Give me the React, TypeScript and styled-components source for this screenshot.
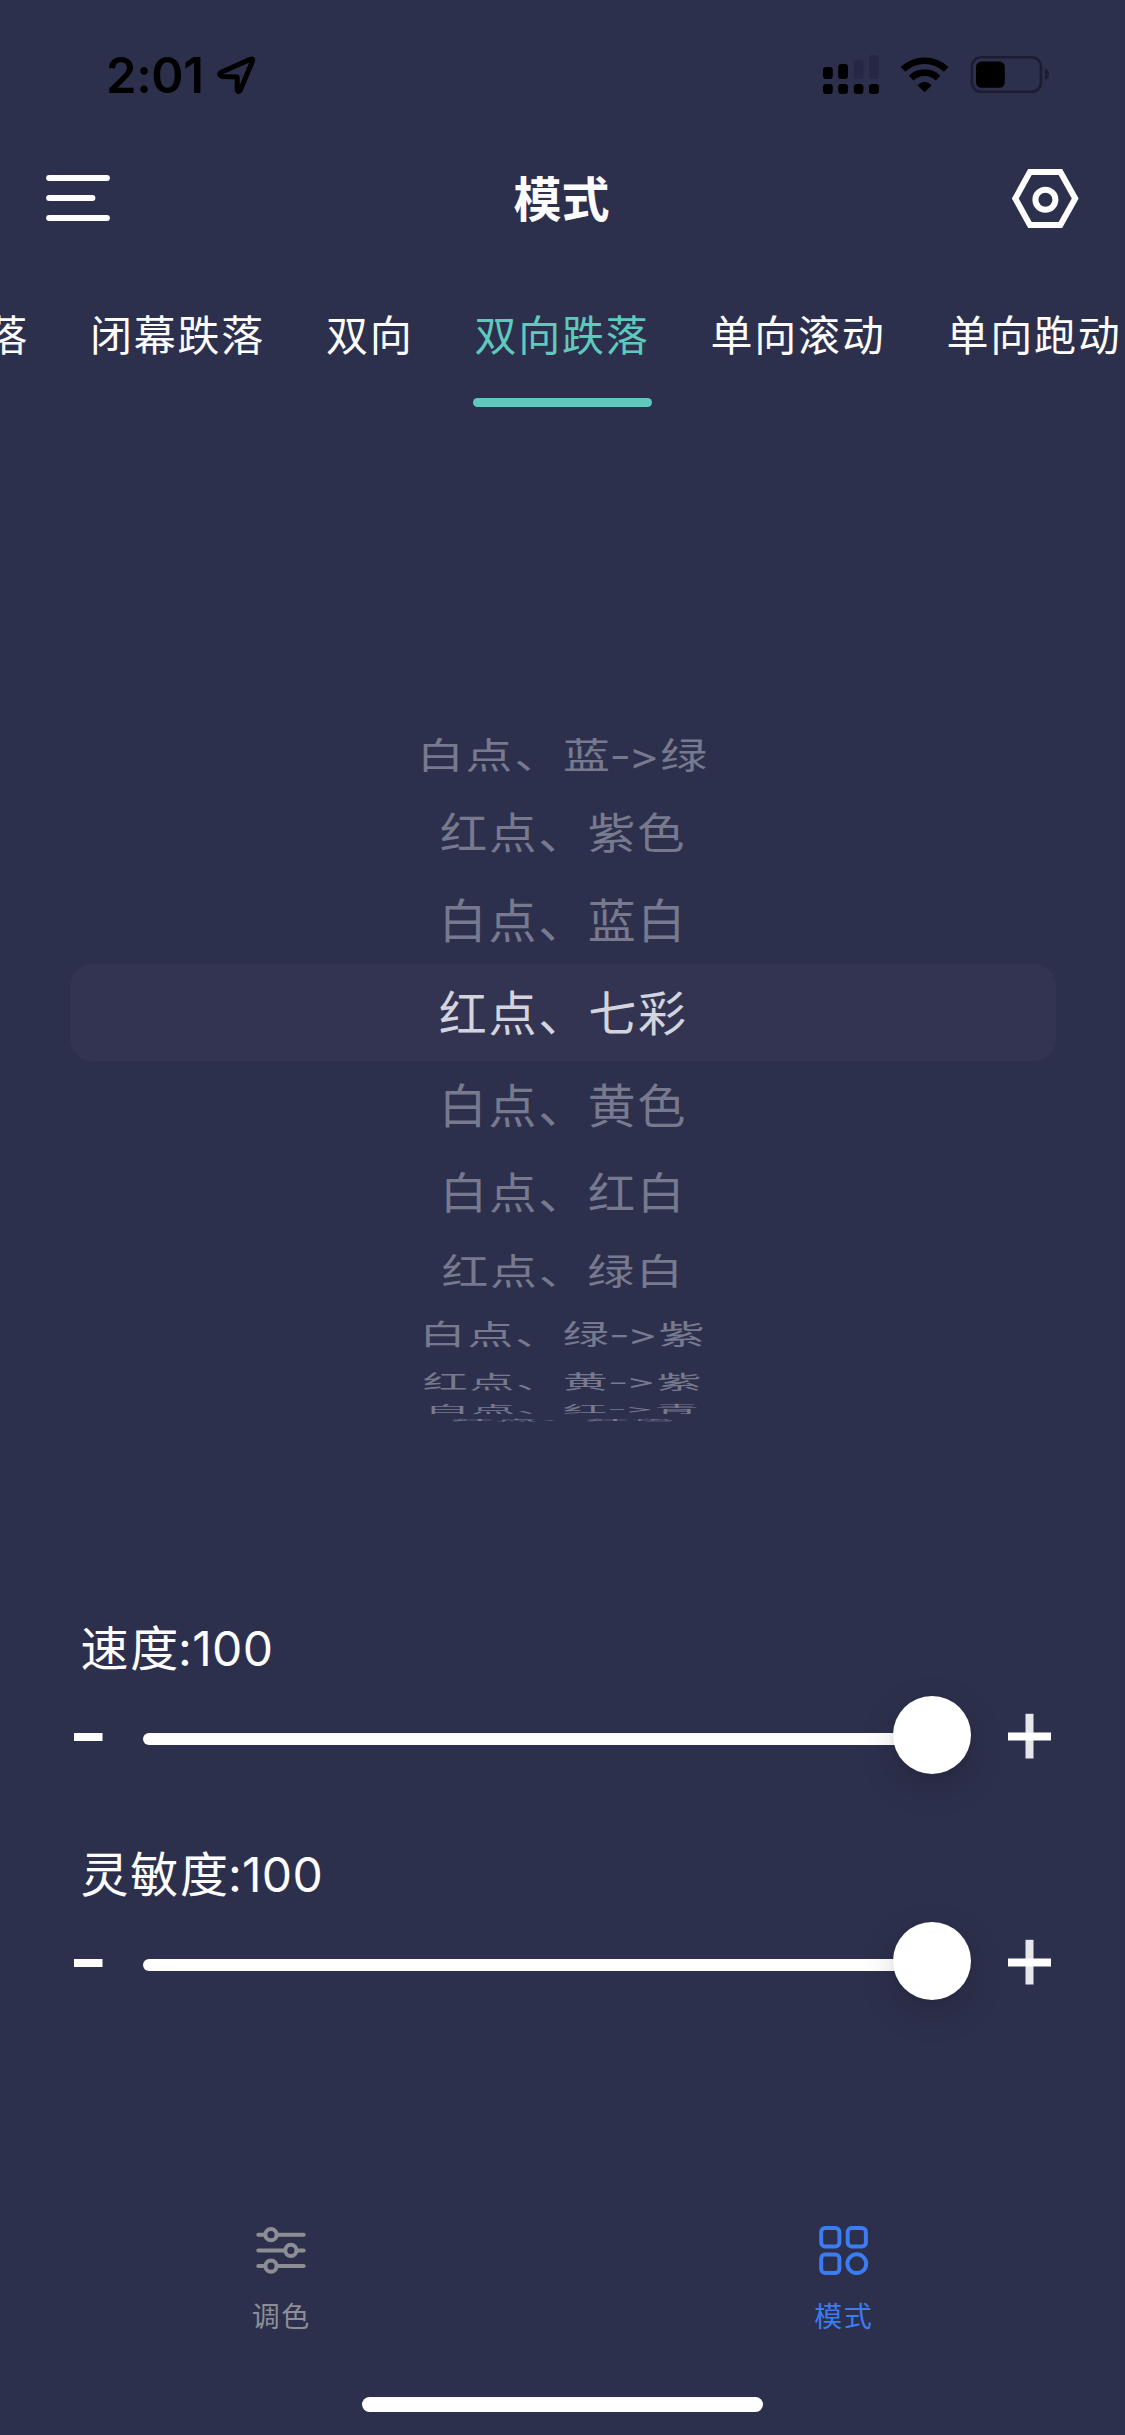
import React from "react";
import styled, { createGlobalStyle } from "styled-components";

const GlobalStyle = createGlobalStyle`
  * { box-sizing: border-box; }
  html, body { margin: 0; padding: 0; background: #2d304c; }
  body { overflow: hidden; }
`;

const Screen = styled.div`
  width: 1125px;
  height: 2435px;
  display: flex;
  flex-direction: column;
  background: #2d304c;
  color: #fdfdff;
  overflow: hidden;
  font-family: Inter, "Noto Sans CJK SC", sans-serif;
`;

const StatusBar = styled.div`
  height: 118px;
  flex: none;
  display: flex;
  align-items: flex-start;
  justify-content: space-between;
  padding: 47px 75px 0 106px;
  color: #000;
`;

const StatusLeft = styled.div`
  display: flex;
  gap: 14px;
`;

const Clock = styled.span`
  width: 96px;
  font-size: 49px;
  line-height: 57px;
  font-weight: 600;
  letter-spacing: -0.4px;
  white-space: nowrap;
`;

const StatusIcons = styled.svg`
  display: block;
  margin-top: 7px;
`;

const NavBar = styled.header`
  height: 162px;
  flex: none;
  display: grid;
  grid-template-columns: 90px 1fr 90px;
  align-items: center;
  padding: 0 44px;
`;

const NavIcon = styled.svg<{ $end?: boolean }>`
  display: block;
  justify-self: ${(p) => (p.$end ? "end" : "start")};
`;

const Title = styled.h1`
  margin: 0 2px 0 0;
  padding-top: 1px;
  text-align: center;
  font-size: 48px;
  line-height: 60px;
  font-weight: 600;
`;

const Tabs = styled.nav`
  height: 140px;
  flex: none;
  display: flex;
  justify-content: center;
  gap: 57px;
  white-space: nowrap;
`;

const Tab = styled.div<{ $active?: boolean }>`
  flex: none;
  height: 127px;
  display: flex;
  flex-direction: column;
  justify-content: space-between;
  padding-top: 25px;
  font-size: 42px;
  line-height: 62px;
  letter-spacing: 1.75px;
  color: ${(p) => (p.$active ? "#5fc9be" : "#fdfdff")};
`;

const TabLabel = styled.span`
  padding: 0 2.5px 0 1.5px;
`;

const Underline = styled.span`
  height: 9px;
  border-radius: 4.5px;
  background: #5fc9be;
`;

const Picker = styled.section`
  height: 1180px;
  flex: none;
  display: grid;
  grid-template-rows: 1fr;
  grid-template-columns: 1fr;
  justify-items: center;
  align-items: start;
  padding-top: 544px;
`;

const PickerBand = styled.div`
  grid-area: 1 / 1;
  width: 986px;
  height: 97px;
  border-radius: 22px;
  background: #333451;
`;

const PickerRow = styled.div<{ $selected: boolean }>`
  grid-area: 1 / 1;
  height: 97px;
  line-height: 99px;
  padding-left: 1.5px;
  font-size: 48px;
  letter-spacing: 1.8px;
  white-space: nowrap;
  color: ${(p) => (p.$selected ? "#d3d4de" : "#77798f")};
`;

const Arrow = styled.span`
  letter-spacing: -3px;
  margin: 0 4px 0 -2px;
`;

const Control = styled.section`
  height: 226px;
  flex: none;
  display: flex;
  flex-direction: column;
  padding: 12px 72px 0 73px;
`;

const ControlLabel = styled.div`
  height: 72px;
  padding-left: 7.5px;
  font-size: 48px;
  line-height: 73px;
  letter-spacing: 1.8px;
`;

const Latin = styled.span`
  letter-spacing: 0.3px;
  margin-left: -2px;
`;

const SliderRow = styled.div`
  display: flex;
  align-items: center;
  height: 78px;
  margin-top: 12px;
`;

const StepIcon = styled.svg`
  display: block;
  flex: none;
  margin-top: 2px;
`;

const Slider = styled.div`
  flex: 1;
  display: flex;
  align-items: center;
  margin: 0 35px 0 39px;
`;

const Track = styled.div`
  flex: 1;
  height: 12px;
  margin: 8px -6px 0 0;
  border-radius: 6px 0 0 6px;
  background: #fff;
`;

const Thumb = styled.div`
  width: 78px;
  height: 78px;
  border-radius: 50%;
  background: #fff;
  box-shadow: 0 12px 36px rgba(0, 0, 0, 0.16), 0 1px 4px rgba(0, 0, 0, 0.08);
`;

const TabBar = styled.footer`
  flex: none;
  display: grid;
  grid-template-columns: 1fr 1fr;
  margin-top: 169px;
  height: 176px;
`;

const TabBarItem = styled.div<{ $active?: boolean }>`
  display: flex;
  flex-direction: column;
  align-items: center;
  gap: 21px;
  padding-top: 4px;
  font-size: 28px;
  line-height: 43px;
  letter-spacing: 1.4px;
  color: ${(p) => (p.$active ? "#3b7cf3" : "#8c8e94")};
`;

const BarIcon = styled.svg`
  display: block;
  fill: none;
  stroke: currentColor;
  stroke-width: 4;
  stroke-linecap: round;
`;

const HomeIndicator = styled.div`
  width: 401px;
  height: 15px;
  border-radius: 8px;
  background: #fff;
  align-self: center;
  flex: none;
`;

const tabs = ["开幕跌落", "闭幕跌落", "双向", "双向跌落", "单向滚动", "单向跑动", "双向"];

const SELECTED = 3;
const rows = [
  "白点、蓝->绿",
  "红点、紫色",
  "白点、蓝白",
  "红点、七彩",
  "白点、黄色",
  "白点、红白",
  "红点、绿白",
  "白点、绿->紫",
  "红点、黄->紫",
  "白点、红->青",
  "红点、红色",
];

const RADIUS = 402;
const STEP = 13.3;
const EDGE = [
  { angle: 77.5, y: 396.5 },
  { angle: 87, y: 407.5 },
];

function wheelTransform(index: number) {
  const offset = index - SELECTED;
  const edge = EDGE[offset - 6];
  const angle = edge ? edge.angle : offset * STEP;
  const rad = (angle * Math.PI) / 180;
  const y = edge ? edge.y : RADIUS * Math.sin(rad);
  const squash = Math.cos(rad);
  const shrink = 1 - 0.1 * (1 - squash);
  return `translateY(${y.toFixed(2)}px) scale(${shrink.toFixed(4)}, ${squash.toFixed(4)})`;
}

function RowText({ text }: { text: string }) {
  const [from, to] = text.split("->");
  if (!to) return <>{text}</>;
  return (
    <>
      {from}
      <Arrow>-&gt;</Arrow>
      {to}
    </>
  );
}

function SliderControl({ label, value }: { label: string; value: number }) {
  return (
    <Control>
      <ControlLabel>
        {label}
        <Latin>:{value}</Latin>
      </ControlLabel>
      <SliderRow>
        <StepIcon width="31" height="46" viewBox="0 0 31 46">
          <path d="M1 24H29.5" stroke="#fff" strokeWidth="8" />
        </StepIcon>
        <Slider>
          <Track />
          <Thumb />
        </Slider>
        <StepIcon width="47" height="46" viewBox="0 0 47 46">
          <path d="M23.5 0.8V45.5" stroke="#e6e7ec" strokeWidth="8" />
          <path d="M2 23.5H45" stroke="#fff" strokeWidth="8" />
        </StepIcon>
      </SliderRow>
    </Control>
  );
}

export default function App() {
  return (
    <>
      <GlobalStyle />
      <Screen>
        <StatusBar>
          <StatusLeft>
            <Clock>2:01</Clock>
            <StatusIcons width="42" height="44" viewBox="216 54 42 44">
              <path
                d="M221.2 72.3 250.2 59.4Q253.8 58 252.3 61.6L240.4 90Q238 93.4 237.2 89.5V76.9L222 76.4Q217.6 74.6 221.2 72.3Z"
                fill="none"
                stroke="#000"
                strokeWidth="5"
                strokeLinejoin="round"
              />
            </StatusIcons>
          </StatusLeft>
          <StatusIcons width="228" height="42" viewBox="822 54 228 42">
            <g fill="#000">
              <rect x="823" y="67" width="9.8" height="12" rx="3" />
              <rect x="838.2" y="64" width="9.8" height="15" rx="3" />
              <rect x="823" y="84" width="9.8" height="10" rx="3" />
              <rect x="838.2" y="84" width="9.8" height="10" rx="3" />
              <rect x="853.8" y="84" width="9.6" height="10" rx="3" />
              <rect x="869" y="84" width="10" height="10" rx="3" />
            </g>
            <rect x="853.8" y="60" width="9.6" height="19" rx="3" fill="#252745" />
            <rect x="869" y="55" width="9.8" height="24" rx="3" fill="#252745" />
            <g fill="none" stroke="#000" strokeWidth="6.6">
              <path d="M903 69.4A31.2 31.2 0 0 1 946.2 69.4" />
              <path d="M911.2 78.1A19.2 19.2 0 0 1 938 78.1" />
            </g>
            <path d="M917.4 85.3Q924.6 78 931.8 85.3L924.6 92.3Z" fill="#000" />
            <rect x="971.8" y="57.2" width="69.2" height="34.6" rx="9.5" fill="none" stroke="#1b1d31" strokeWidth="2.6" />
            <rect x="976" y="61.4" width="28.8" height="26.4" rx="5.5" fill="#000" />
            <path d="M1045 68.6Q1049 70.4 1049 74.3T1045 80Z" fill="#1b1d31" />
          </StatusIcons>
        </StatusBar>

        <NavBar>
          <NavIcon width="68" height="50" viewBox="0 0 68 50">
            <path
              d="M5.1 4H62.9M5.1 24H48.4M5.1 44H62.9"
              stroke="#fdfdff"
              strokeWidth="6"
              strokeLinecap="round"
            />
          </NavIcon>
          <Title>模式</Title>
          <NavIcon $end width="70" height="62" viewBox="1011 168 70 62">
            <g fill="none" stroke="#fdfdff">
              <path d="M1029.9 172H1060.4L1075.2 198.5 1060.4 225H1029.9L1015.3 198.5Z" strokeWidth="6" />
              <circle cx="1045.4" cy="199.7" r="10" strokeWidth="6" />
            </g>
          </NavIcon>
        </NavBar>

        <Tabs>
          {tabs.map((t, i) => (
            <Tab key={i} $active={i === 3}>
              <TabLabel>{t}</TabLabel>
              {i === 3 && <Underline />}
            </Tab>
          ))}
        </Tabs>

        <Picker>
          <PickerBand />
          {rows.map((r, i) => (
            <PickerRow key={r} $selected={i === SELECTED} style={{ transform: wheelTransform(i) }}>
              <RowText text={r} />
            </PickerRow>
          ))}
        </Picker>

        <SliderControl label="速度" value={100} />
        <SliderControl label="灵敏度" value={100} />

        <TabBar>
          <TabBarItem>
            <BarIcon width="50" height="50" viewBox="255.5 2225 50 50">
              <path d="M257.8 2234.7H264.2M277 2234.7H303.2M257.8 2250.4H284M297 2250.4H303.2M257.8 2266.1H264.2M277 2266.1H303.2" />
              <circle cx="270.5" cy="2234.7" r="5.6" />
              <circle cx="290.4" cy="2250.4" r="5.6" />
              <circle cx="270.5" cy="2266.1" r="5.6" />
            </BarIcon>
            调色
          </TabBarItem>
          <TabBarItem $active>
            <BarIcon width="50" height="50" viewBox="818.5 2225 50 50">
              <rect x="820.7" y="2228" width="18.2" height="18.6" rx="4" />
              <rect x="847.2" y="2228" width="18.2" height="18.6" rx="4" />
              <rect x="820.7" y="2254.4" width="18.2" height="18.6" rx="4" />
              <circle cx="856.3" cy="2263.7" r="9.4" />
            </BarIcon>
            模式
          </TabBarItem>
        </TabBar>
        <HomeIndicator />
      </Screen>
    </>
  );
}
